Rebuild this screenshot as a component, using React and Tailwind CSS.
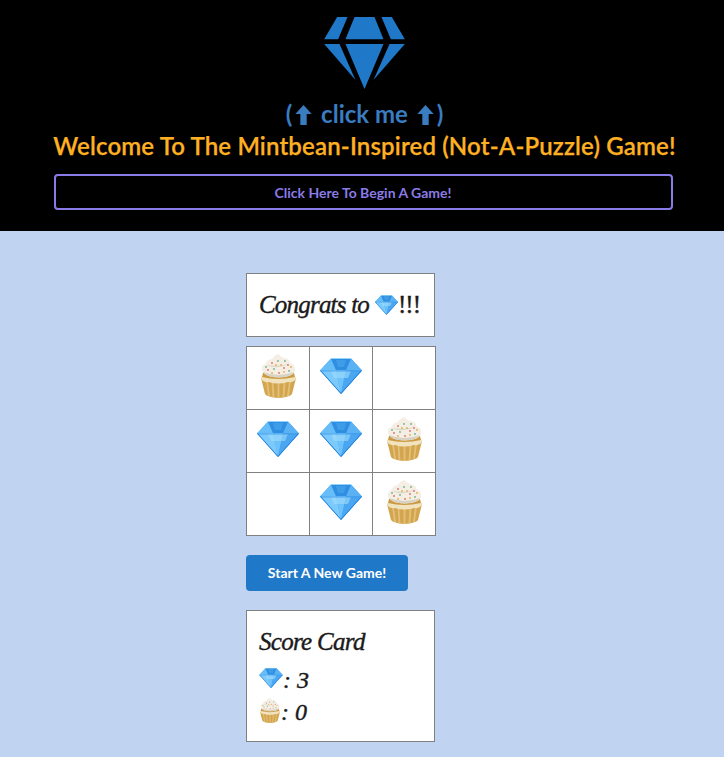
import React from 'react';

const lato = { fontFamily: 'Lato, sans-serif' };
const script = { fontFamily: '"Liberation Serif", serif' };

// hand drawn stand-ins for the gem and cupcake emoji
const GemEmoji = ({ className }) => (
  <svg viewBox="0 0 42 36" className={className}>
    <polygon points="11,0.500 31,0.500 42,12.500 21,36 0,12.500" fill="#45a6f0" />
    <polygon points="11,0.500 16,12 0,12.500" fill="#66bdf8" />
    <polygon points="31,0.500 42,12.500 26,12" fill="#5ab2f5" />
    <polygon points="11,0.500 31,0.500 26,12 16,12" fill="#2f8ee2" />
    <polygon points="16,2 26,2 24,9 18,9" fill="#3f9de8" />
    <polygon points="0,12.500 16,12 21,36" fill="#7ccafb" />
    <polygon points="16,12 26,12 21,36" fill="#6cc2fb" />
    <polygon points="42,12.500 26,12 21,36" fill="#4aa6f0" />
    <polygon points="11,13 31,13 28,20 14,20" fill="#a5defe" opacity="0.55" />
    <path d="M0.500 13 H41.500" stroke="#3d98e6" strokeWidth="0.8" />
    <path d="M41.500 12.500 L21 35.500 L0.500 12.500" fill="none" stroke="#1f7fdc" strokeWidth="1" />
    <path d="M11 0.500 H31" stroke="#8ed4fd" strokeWidth="1" />
  </svg>
);

const CupcakeEmoji = ({ className }) => (
  <svg viewBox="0 0 37 44" className={className}>
    {/* wrapper */}
    <path d="M1 24 Q18 30 36 24 L32 40 Q30 43 18.500 44 Q7 43 5 40 Z" fill="#d3a54f" />
    <path d="M7 27 L9 42 M12.500 28 L13.500 43 M18.500 28 L18.500 44 M24.500 28 L23.500 43 M30 27 L28 42" stroke="#e3c079" strokeWidth="1.8" />
    <path d="M0.500 23 Q2 29 9 28 Q18 31 28 28 Q35 29 36.500 23 Q18 19 0.500 23 Z" fill="#f0e3be" />
    {/* cake */}
    <path d="M3 19 Q18 16 34 19 L35 23 Q18 27 2 23 Z" fill="#cc9a42" />
    {/* frosting */}
    <path d="M2 16 Q1 11 6 10 Q6 6 12 5 Q14 1 19 0 Q20 3 25 4 Q31 6 30 9 Q36 11 35 17 Q33 23 18.500 23.500 Q4 23 2 16 Z" fill="#f4eee4" />
    <path d="M3 18 Q18 24 34 18 Q31 23 18.500 23.500 Q6 23 3 18 Z" fill="#d8d2c4" />
    <path d="M6 11 Q18 16 30 9.500 Q20 13 6 11 Z" fill="#dcd6ca" />
    <g fill="#d8746a">
      <circle cx="12" cy="9" r="0.900" />
      <circle cx="24" cy="14" r="0.900" />
      <circle cx="8" cy="16" r="0.900" />
      <circle cx="19" cy="19" r="0.900" />
      <circle cx="28" cy="11" r="0.900" />
    </g>
    <g fill="#6fb38c">
      <circle cx="18" cy="7" r="0.900" />
      <circle cx="14" cy="15" r="0.900" />
      <circle cx="29" cy="17" r="0.900" />
      <circle cx="25" cy="7" r="0.900" />
      <circle cx="6" cy="13" r="0.900" />
    </g>
    <g fill="#e3b04e">
      <circle cx="21" cy="11" r="0.900" />
      <circle cx="12" cy="19" r="0.900" />
      <circle cx="31" cy="13" r="0.900" />
      <circle cx="16" cy="11" r="0.900" />
      <circle cx="24" cy="18" r="0.900" />
    </g>
  </svg>
);

const UpArrow = () => (
  <svg viewBox="0 0 18 22" className="inline-block w-[17px] h-[20px] align-[-2px] mx-[3px]">
    <polygon points="9,0 18,10 12.500,10 12.500,22 5.500,22 5.500,10 0,10" fill="#3a7cc0" />
  </svg>
);

const board = [
  ['cake', 'gem', ''],
  ['gem', 'gem', 'cake'],
  ['', 'gem', 'cake'],
];

const Cell = ({ value }) => (
  <div className="w-[63px] h-[63px] border-r border-b border-[#808080] flex items-center justify-center pb-[4px]">
    {value === 'gem' && <GemEmoji className="w-[42px] h-[36px]" />}
    {value === 'cake' && <CupcakeEmoji className="w-[37px] h-[44px]" />}
  </div>
);

export default function App() {
  return (
    <div className="min-h-screen bg-[#c0d4f2]" style={lato}>
      {/* Header */}
      <header className="bg-black h-[231px] pt-[17px] pl-[54px]">
        <div className="w-[621px] flex flex-col items-center">
          <svg viewBox="254 51 242 216" className="w-[81px] h-[72px]">
            <g fill="#1f78c8">
              <polygon points="293,51 324,51 296,118 254,118" />
              <polygon points="345,51 405,51 432,118 318,118" />
              <polygon points="426,51 457,51 496,118 454,118" />
              <polygon points="254,132 300,132 348,240" />
              <polygon points="318,132 432,132 375,267" />
              <polygon points="450,132 496,132 402,240" />
            </g>
          </svg>
          <div className="text-[24px] leading-[29px] mt-[10px] font-bold text-[#3a7cc0] whitespace-nowrap">
            (<UpArrow /> click me <UpArrow />)
          </div>
          <h1 className="text-[24px] leading-[29px] mt-[3px] font-semibold text-[#feb022] whitespace-nowrap tracking-[0.16px] [-webkit-text-stroke:0.25px]">
            Welcome To The Mintbean-Inspired (Not-A-Puzzle) Game!
          </h1>
          <button className="mt-[14px] self-start w-[619px] h-[36px] border-2 border-[#8a7ce6] rounded-[4px] text-[14px] font-bold text-[#8a7ce6] pr-[1px]">
            Click Here To Begin A Game!
          </button>
        </div>
      </header>

      {/* Game */}
      <main className="w-[190px] ml-[246px] pt-[42px] pb-[15px]">
        <div className="w-[189px] h-[64px] bg-white border border-[#808080] px-3 flex items-center whitespace-nowrap text-[25px] tracking-[-0.8px] text-[#1a1a1a] italic [-webkit-text-stroke:0.4px]" style={script}>
          Congrats to<GemEmoji className="w-[23px] h-[20px] ml-[6px]" />
          <span className="not-italic tracking-[-1px]">!!!</span>
        </div>

        <div className="mt-[9px] w-[190px] bg-white border-l border-t border-[#808080]">
          {board.map((row, i) => (
            <div key={i} className="flex">
              {row.map((value, j) => (
                <Cell key={j} value={value} />
              ))}
            </div>
          ))}
        </div>

        <button className="mt-[19px] w-[162px] h-[36px] bg-[#1f78c8] rounded-[4px] text-white text-[14px] font-bold pb-[1px]">
          Start A New Game!
        </button>

        <div className="mt-[19px] w-[189px] h-[132px] bg-white border border-[#808080] px-3 pt-[15px] text-[#1a1a1a] italic [-webkit-text-stroke:0.4px]" style={script}>
          <div className="text-[25px] tracking-[-0.7px] leading-[32px]">Score Card</div>
          <div className="mt-[6px] flex items-center text-[24px] leading-[32px]">
            <GemEmoji className="w-[24px] h-[20px] mb-[4px]" />: 3
          </div>
          <div className="flex items-center text-[24px] leading-[32px]">
            <CupcakeEmoji className="w-[22px] h-[25px] mb-[4px]" />: 0
          </div>
        </div>
      </main>
    </div>
  );
}
